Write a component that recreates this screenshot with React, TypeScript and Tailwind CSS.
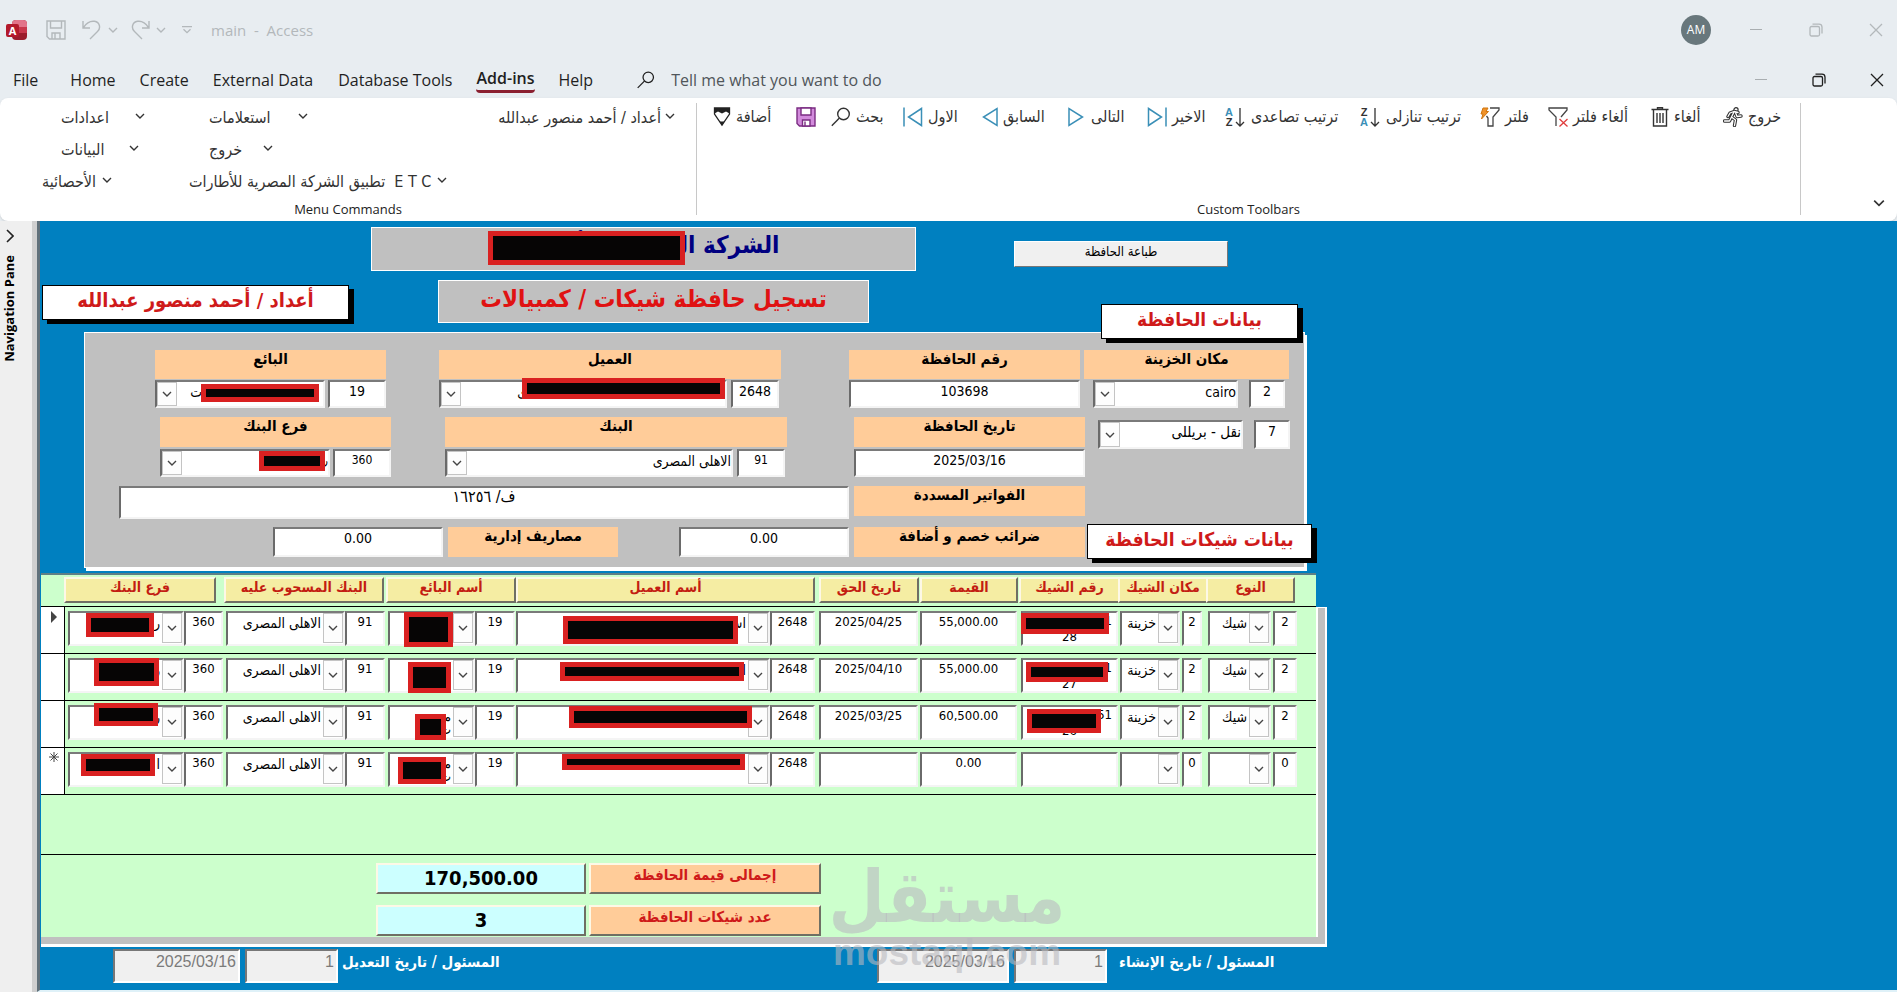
import { useState, type ReactNode } from 'react'
import clsx from 'clsx'

const arabic = "font-['DejaVu_Sans_Condensed','DejaVu_Sans',sans-serif]"
const sunken = 'border-2 border-t-[#7a7a7a] border-l-[#6a6a6a] border-r-[#f4f4f4] border-b-[#f4f4f4] bg-white'
const raised = 'border-2 border-t-[#fdf8e6] border-l-[#fdf8e6] border-r-[#6f6f64] border-b-[#6f6f64]'

const Chevron = ({ className }: { className?: string }) => (
  <svg viewBox="0 0 10 6" className={clsx('h-1.5 w-2.5 shrink-0', className)} fill="none" stroke="currentColor" strokeWidth="1.4">
    <path d="M1 1l4 4 4-4" />
  </svg>
)

const SearchIcon = ({ className }: { className?: string }) => (
  <svg viewBox="0 0 20 20" className={className} fill="none" stroke="currentColor" strokeWidth="1.4">
    <circle cx="12.5" cy="7" r="5.8" />
    <path d="M8.2 11.2L.8 18.8" />
  </svg>
)

// black box that hides a private value
const Redacted = ({ className }: { className: string }) => (
  <span className={clsx('absolute z-10 border-[5px] border-[#d92121] bg-[#060505]', className)} />
)

interface ComboProps {
  label: string
  value: string
  side?: 'left' | 'right'
  className?: string
  textClassName?: string
  children?: ReactNode
}
const Combo = ({ label, value, side = 'left', className, textClassName = 'text-sm', children }: ComboProps) => (
  <div className={clsx('relative grid', sunken, className)}>
    <select
      dir="rtl"
      aria-label={label}
      defaultValue={value}
      className={clsx(
        'col-start-1 row-start-1 h-6 w-full min-w-0 appearance-none self-start overflow-hidden bg-transparent pb-1.5 outline-none',
        side === 'left' ? 'pl-6' : 'pr-[22px]',
        textClassName,
      )}
    >
      <option>{value}</option>
    </select>
    <span
      className={clsx(
        'pointer-events-none col-start-1 row-start-1 flex w-5 items-center justify-center border border-[#c4c4c4] bg-[#fdfdfd] text-[#444]',
        side === 'left' ? 'justify-self-start' : 'mb-px justify-self-end',
      )}
    >
      <Chevron />
    </span>
    {children}
  </div>
)

interface BoxProps {
  id?: string
  label?: string
  value: string
  className?: string
  dir?: 'rtl' | 'ltr'
}
const Box = ({ id, label, value, className, dir }: BoxProps) => {
  const [text, setText] = useState(value)
  return (
    <div className={clsx('flex items-start', sunken, className)}>
      <input
        id={id}
        dir={dir}
        aria-label={label}
        value={text}
        onChange={(e) => setText(e.target.value)}
        className="h-5 w-full min-w-0 bg-transparent pb-[3px] text-center outline-none"
      />
    </div>
  )
}

const FieldLabel = ({ htmlFor, className, children }: { htmlFor?: string; className?: string; children: ReactNode }) => (
  <label htmlFor={htmlFor} dir="rtl" className={clsx('block bg-[#ffcc99] text-center text-[15px] leading-[18px] font-bold', className)}>
    {children}
  </label>
)

const SectionTitle = ({ className, children }: { className?: string; children: ReactNode }) => (
  <h2
    dir="rtl"
    className={clsx(
      'z-10 h-[35px] border border-black bg-white text-center leading-7 font-bold text-[#cf1a1a] shadow-[5px_4px_0_#000]',
      className,
    )}
  >
    {children}
  </h2>
)

const TitleBar = () => (
  <header className="font-['Open_Sans',sans-serif] text-[#1f1f1f]">
    <div className="flex h-[60px] items-center pl-1.5 text-[#b3b8bb]">
      <svg viewBox="0 0 22 22" className="size-[22px]">
        <rect x="6" y="1" width="15" height="20" rx="4" fill="#9b1c2c" />
        <path d="M6 5a4 4 0 014-4h7a4 4 0 014 4v3H6z" fill="#e2748a" />
        <path d="M6 8h15v6H6z" fill="#c8374c" />
        <rect x="0" y="5" width="13" height="13" rx="2" fill="#b3192b" />
        <text x="6.5" y="15.5" fontSize="11" fontWeight="bold" textAnchor="middle" fill="#fff">A</text>
      </svg>
      <button aria-label="Save" className="ml-[18px]">
        <svg viewBox="0 0 20 20" className="size-5" fill="none" stroke="currentColor" strokeWidth="1.4">
          <path d="M1 1h18v18H3.5L1 16.5zM4.5 1v7h11V1M6 19v-6h8v6M9 13v6" />
        </svg>
      </button>
      <button aria-label="Undo" className="ml-4 flex items-center gap-1.5">
        <svg viewBox="0 0 20 20" className="size-5" fill="none" stroke="currentColor" strokeWidth="1.4">
          <path d="M1 1v7h7M1.5 7.5C5 2 9 .8 12.5 1.3c5.5.8 6.5 7 3 10.2L8 19" />
        </svg>
        <Chevron className="w-2" />
      </button>
      <button aria-label="Redo" className="ml-3 flex items-center gap-1.5">
        <svg viewBox="0 0 20 20" className="size-5" fill="none" stroke="currentColor" strokeWidth="1.4">
          <path d="M19 1v7h-7M18.5 7.5C15 2 11 .8 7.5 1.3c-5.5.8-6.5 7-3 10.2L12 19" />
        </svg>
        <Chevron className="w-2" />
      </button>
      <button aria-label="Customize toolbar" className="ml-4">
        <svg viewBox="0 0 10 8" className="h-2 w-2.5" fill="none" stroke="currentColor" strokeWidth="1.3">
          <path d="M0 .7h10M1.5 3.2L5 6.7l3.5-3.5" />
        </svg>
      </button>
      <span className="ml-[19px] text-[15px] whitespace-pre">main  -  Access</span>
      <div className="ml-auto flex items-center pr-3.5">
        <span className="mr-[38px] flex size-[30px] items-center justify-center rounded-full bg-[#68777c] text-xs text-white">AM</span>
        <WindowButtons wide />
      </div>
    </div>
    <nav className="flex h-[38px] items-center pt-px text-base">
      <a href="#file" className="ml-[13px]">File</a>
      <a href="#home" className="ml-8">Home</a>
      <a href="#create" className="ml-6">Create</a>
      <a href="#external" className="ml-6">External Data</a>
      <a href="#tools" className="ml-[25px]">Database Tools</a>
      <a href="#addins" className="ml-6 rounded-sm border-b-[3px] border-[#8b2030] font-semibold">Add-ins</a>
      <a href="#help" className="ml-6">Help</a>
      <SearchIcon className="ml-[44px] size-[18px]" />
      <input
        aria-label="Tell me what you want to do"
        placeholder="Tell me what you want to do"
        className="ml-4 w-64 bg-transparent outline-none placeholder:text-[#50565a]"
      />
      <div className="ml-auto flex items-center pr-[13px]">
        <WindowButtons />
      </div>
    </nav>
  </header>
)

const WindowButtons = ({ wide }: { wide?: boolean }) => (
  <>
    <button aria-label="Minimize" className={clsx('text-[#a9aeb1]', wide ? 'mr-[46px]' : 'mr-11')}>
      <svg viewBox="0 0 14 14" className="size-3.5" stroke="currentColor"><path d="M1 6.5h12" /></svg>
    </button>
    <button aria-label="Restore" className={wide ? 'mr-[46px]' : 'mr-11'}>
      <svg viewBox="0 0 14 14" className="size-3.5" fill="none" stroke="currentColor" strokeWidth="1.3">
        <rect x="1" y="3.5" width="9.5" height="9.5" rx="1.5" />
        <path d="M3.5 1.2H10A3 3 0 0113 4v6.5" />
      </svg>
    </button>
    <button aria-label="Close">
      <svg viewBox="0 0 14 14" className="size-3.5" stroke="currentColor" strokeWidth="1.3"><path d="M1 1l12 12M13 1L1 13" /></svg>
    </button>
  </>
)

const RibbonMenu = ({ className, label }: { className: string; label: string }) => (
  <button className={clsx('flex items-center whitespace-pre', className)}>
    <span dir="rtl">{label}</span>
    <Chevron className="mb-1 w-2" />
  </button>
)

const blue = '#3a8fb7'
const sortIcon = (top: string, bottom: string, topFill: string, bottomFill: string) => (
  <svg viewBox="0 0 22 20" className="h-5 w-[22px] font-['Liberation_Sans',sans-serif]">
    <text x="5" y="9" fontSize="11" fontWeight="bold" textAnchor="middle" fill={topFill}>{top}</text>
    <text x="5" y="19" fontSize="11" fontWeight="bold" textAnchor="middle" fill={bottomFill}>{bottom}</text>
    <path d="M16 1v18M12 15l4 4 4-4" fill="none" stroke="#333" strokeWidth="1.3" />
  </svg>
)

const runner = 'M15 5.5l-4-1-4 1.5-2 3.5M11 5l-2.5 5 4 3-1 5.5M8.5 10L6.5 14H1.5M12.5 5.5l1.5 4 4-.5'

const tools: { label: string; title: string; width: string; icon: ReactNode }[] = [
  {
    label: 'أضافة', title: 'Add', width: 'w-[83px]',
    icon: (
      <svg viewBox="0 0 17 20" className="h-5 w-[18px]">
        <path d="M1 1h15v6L8.5 18 1 7z" fill="#fff" stroke="#222" strokeWidth="1.3" />
        <path d="M1 1h15v5.5l-3.5-2-4 2-4-2L1 6.5zM6 14.5h5l-2.5 4z" fill="#222" />
      </svg>
    ),
  },
  {
    label: '', title: 'Save', width: 'w-[35px]',
    icon: (
      <svg viewBox="0 0 20 20" className="size-5" stroke="#7b2d82" strokeWidth="1.4">
        <path d="M1 1h18v18H3.5L1 16.5z" fill="#d28bdc" />
        <path d="M5 1h10v7H5zM6.5 19v-6H14v6z" fill="#fff" />
        <path d="M9 14.5V19" />
      </svg>
    ),
  },
  { label: 'بحث', title: 'Find', width: 'w-[72px]', icon: <SearchIcon className="size-5" /> },
  {
    label: 'الاول', title: 'First', width: 'w-[79px]',
    icon: <svg viewBox="0 0 20 20" className="size-5" fill="none" stroke={blue} strokeWidth="1.5"><path d="M1 .5v19M18.5 1.5v17L5.5 10z" /></svg>,
  },
  {
    label: 'السابق', title: 'Previous', width: 'w-[86px]',
    icon: <svg viewBox="0 0 16 20" className="h-5 w-4" fill="none" stroke={blue} strokeWidth="1.5"><path d="M15 1.5v17L1.5 10z" /></svg>,
  },
  {
    label: 'التالى', title: 'Next', width: 'w-[79px]',
    icon: <svg viewBox="0 0 16 20" className="mr-0.5 h-5 w-4" fill="none" stroke={blue} strokeWidth="1.5"><path d="M1 1.5v17L14.5 10z" /></svg>,
  },
  {
    label: 'الاخير', title: 'Last', width: 'w-[77px]',
    icon: <svg viewBox="0 0 20 20" className="size-5" fill="none" stroke={blue} strokeWidth="1.5"><path d="M19 .5v19M1.5 1.5v17L14.5 10z" /></svg>,
  },
  { label: 'ترتيب تصاعدى', title: 'Sort ascending', width: 'w-[135px]', icon: sortIcon('A', 'Z', blue, '#333') },
  { label: 'ترتيب تنازلى', title: 'Sort descending', width: 'w-[121px]', icon: sortIcon('Z', 'A', '#333', blue) },
  {
    label: 'فلتر', title: 'Filter', width: 'w-[68px]',
    icon: (
      <svg viewBox="0 0 20 20" className="size-5" fill="none" stroke="#444" strokeWidth="1.3">
        <path d="M10 1h9v2l-6 7v9H8v-8L6.5 9" />
        <path d="M3 1h5L6 4.5h2.5L1.5 12 3 7H1z" fill="#f0932b" stroke="#d0760e" strokeWidth="1" />
      </svg>
    ),
  },
  {
    label: 'ألغاء فلتر', title: 'Clear filter', width: 'w-[103px]',
    icon: (
      <svg viewBox="0 0 20 20" className="size-5" fill="none" stroke="#444" strokeWidth="1.3">
        <path d="M8 19v-9L1 3V1h18v2l-6 7" />
        <path d="M11.5 12l8 7.5M19.5 12l-8 7.5" stroke="#e03c3c" />
      </svg>
    ),
  },
  {
    label: 'ألغاء', title: 'Delete', width: 'w-[72px]',
    icon: (
      <svg viewBox="0 0 18 20" className="h-5 w-[18px]" fill="none" stroke="#333" strokeWidth="1.4">
        <path d="M.5 2.5h17M6.5 2V.7h5V2M2.5 3v16h13V3M6 6v10M9 6v10M12 6v10" />
      </svg>
    ),
  },
  {
    label: 'خروج', title: 'Exit', width: 'w-[77px]',
    icon: (
      <svg viewBox="0 0 20 20" className="size-5" fill="none" strokeLinecap="round" strokeLinejoin="round">
        <circle cx="13" cy="2.8" r="2.1" stroke="#333" strokeWidth="1.2" />
        <path d={runner} stroke="#333" strokeWidth="3.4" />
        <path d={runner} stroke="#fff" strokeWidth="1.3" />
      </svg>
    ),
  },
]

const Ribbon = () => (
  <section className="flex h-[123px] rounded-lg bg-white text-base text-[#333] shadow-sm">
    <div className="flex w-[697px] flex-col border-r [border-image:linear-gradient(transparent_6px,#c8c8c8_6px,#c8c8c8_116px,transparent_116px)_1]">
      <div className={clsx('flex h-[98px] shrink-0 flex-col pt-1', arabic)}>
        <div className="flex h-8 shrink-0">
          <RibbonMenu className="ml-[61px] w-[84px] justify-between" label="اعدادات" />
          <RibbonMenu className="ml-16 w-[99px] justify-between" label="استعلامات" />
          <RibbonMenu className="mr-[21px] ml-auto gap-1" label="أعداد / أحمد منصور عبدالله" />
        </div>
        <div className="flex h-8 shrink-0">
          <RibbonMenu className="ml-[61px] w-[78px] justify-between" label="البيانات" />
          <RibbonMenu className="ml-[70px] w-16 justify-between" label="خروج" />
        </div>
        <div className="flex h-8 shrink-0">
          <RibbonMenu className="ml-[42px] w-[70px] justify-between" label="الأحصائية" />
          <RibbonMenu className="ml-[77px] w-[258px] justify-between" label="E T C  تطبيق الشركة المصرية للأطارات" />
        </div>
      </div>
      <span className="text-center font-['Open_Sans',sans-serif] text-[13px] leading-[26px] text-[#222]">Menu Commands</span>
    </div>
    <div className="flex w-[1104px] flex-col border-r [border-image:linear-gradient(transparent_6px,#c8c8c8_6px,#c8c8c8_116px,transparent_116px)_1]">
      <div className={clsx('flex h-[98px] shrink-0 items-start pt-[7px] pl-4', arabic)}>
        {tools.map((tool) => (
          <button key={tool.title} title={tool.title} className={clsx('flex h-6 shrink-0 items-center gap-[5px] whitespace-nowrap', tool.width)}>
            {tool.icon}
            <span dir="rtl">{tool.label}</span>
          </button>
        ))}
      </div>
      <span className="text-center font-['Open_Sans',sans-serif] text-[13px] leading-[26px] text-[#222]">Custom Toolbars</span>
    </div>
    <button aria-label="Collapse ribbon" className="mr-3 mb-3.5 ml-auto self-end">
      <Chevron className="h-2 w-3" />
    </button>
  </section>
)

const DepositPanel = () => (
  <section className="relative ml-11 flex h-[236px] w-[1221px] flex-col border border-white bg-[#c0c0c0] pt-[17px] text-sm shadow-[2px_3px_0_#fff]">
    <div className="flex pl-[70px]">
      <div className="w-[231px]">
        <FieldLabel htmlFor="seller" className="h-[29px]">البائع</FieldLabel>
        <div className="mt-px flex h-7 gap-[3px]">
          <Combo label="البائع" value="ت" className="w-[170px]" textClassName="pr-[121px] text-sm">
            <Redacted className="top-0.5 right-1 h-[18px] w-[118px]" />
          </Combo>
          <Box id="seller" value="19" className="w-[58px]" />
        </div>
      </div>
      <div className="ml-[53px] w-[342px]">
        <FieldLabel htmlFor="customer" className="h-[29px]">العميل</FieldLabel>
        <div className="mt-px flex h-7 gap-1">
          <Combo label="العميل" value="ى" className="w-[288px]" textClassName="pr-[198px] text-sm">
            <Redacted className="-top-1 right-0 h-[21px] w-[203px]" />
          </Combo>
          <Box id="customer" value="2648" className="w-12" />
        </div>
      </div>
      <div className="ml-[68px] w-[231px]">
        <FieldLabel htmlFor="number" className="h-[29px]">رقم الحافظة</FieldLabel>
        <Box id="number" value="103698" className="mt-px h-7" />
      </div>
      <div className="ml-1 w-[205px]">
        <FieldLabel htmlFor="safe" className="h-[29px]">مكان الخزينة</FieldLabel>
        <div className="mt-px flex h-7 gap-[11px] pl-[9px]">
          <Combo label="مكان الخزينة" value="cairo" className="w-[145px]" />
          <Box id="safe" value="2" className="w-9" />
        </div>
      </div>
    </div>
    <div className="mt-[9px] flex pl-[75px]">
      <div className="w-[231px]">
        <FieldLabel htmlFor="branch" className="h-[30px]">فرع البنك</FieldLabel>
        <div className="mt-0.5 flex h-7 gap-[3px] text-xs">
          <Combo label="فرع البنك" value="ر" className="w-[170px]" textClassName="text-xs">
            <Redacted className="top-0 right-[3px] h-5 w-[66px]" />
          </Combo>
          <Box id="branch" value="360" className="w-[58px]" />
        </div>
      </div>
      <div className="ml-[54px] w-[342px]">
        <FieldLabel htmlFor="bank" className="h-[30px]">البنك</FieldLabel>
        <div className="mt-0.5 flex h-7 gap-1 text-xs">
          <Combo label="البنك" value="الاهلى المصرى" className="w-[288px]" />
          <Box id="bank" value="91" className="w-12" />
        </div>
      </div>
      <div className="ml-[67px] w-[231px]">
        <FieldLabel htmlFor="date" className="h-[30px]">تاريخ الحافظة</FieldLabel>
        <Box id="date" value="2025/03/16" className="mt-0.5 h-7" />
      </div>
      <div className="mt-[3px] ml-[13px] flex h-[29px] gap-[11px]">
        <Combo label="نوع النشاط" value="نقل - بريللى" className="w-[145px]" textClassName="text-[15px]" />
        <Box label="كود النشاط" value="7" className="w-9" />
      </div>
    </div>
    <div className="mt-[9px] flex gap-[5px] pl-[34px] text-base">
      <Box id="invoices" dir="rtl" value="ف/ ١٦٢٥٦" className="h-[33px] w-[730px]" />
      <FieldLabel htmlFor="invoices" className="h-[30px] w-[231px]">الفواتير المسددة</FieldLabel>
    </div>
    <div className="mt-2 flex pl-[188px]">
      <Box id="fees" value="0.00" className="h-[30px] w-[170px]" />
      <FieldLabel htmlFor="fees" className="ml-[5px] h-[30px] w-[170px]">مصاريف إدارية</FieldLabel>
      <Box id="taxes" value="0.00" className="ml-[61px] h-[30px] w-[170px]" />
      <FieldLabel htmlFor="taxes" className="ml-[5px] h-[30px] w-[231px]">ضرائب خصم و أضافة</FieldLabel>
    </div>
    <SectionTitle className="absolute top-[191px] left-[1002px] w-[225px] text-[19px]">بيانات شيكات الحافظة</SectionTitle>
  </section>
)

interface Cheque {
  mark: ReactNode
  branch: string
  branchMask: string
  seller: string[]
  sellerMask: string
  customer: string
  customerMask: string
  due: string
  amount: string
  number: string[]
  numberMask?: string
  code: string
  place: string
  type: string
}

const cheques: Cheque[] = [
  {
    mark: <svg viewBox="0 0 6 12" className="ml-2.5 h-3 w-1.5"><path d="M0 0l6 6-6 6z" fill="#444" /></svg>,
    branch: 'ر', branchMask: 'top-0 left-4 h-6 w-[68px]',
    seller: [], sellerMask: '-top-px left-3.5 h-[35px] w-[49px]',
    customer: 'اس', customerMask: 'top-[3px] left-[45px] h-7 w-[175px]',
    due: '2025/04/25', amount: '55,000.00',
    number: ['1', '28'], numberMask: 'top-0 -left-0.5 h-[21px] w-[88px]',
    code: '2', place: 'خزينة', type: 'شيك',
  },
  {
    mark: null,
    branch: 'ر', branchMask: '-top-0.5 left-6 h-7 w-[65px]',
    seller: [], sellerMask: 'top-0.5 left-[18px] h-[31px] w-[43px]',
    customer: 'ا', customerMask: 'top-0.5 left-[42px] h-[19px] w-[184px]',
    due: '2025/04/10', amount: '55,000.00',
    number: ['1', '27'], numberMask: 'top-0.5 left-[3px] h-5 w-[82px]',
    code: '2', place: 'خزينة', type: 'شيك',
  },
  {
    mark: null,
    branch: 'ر', branchMask: '-top-1 left-6 h-[23px] w-16',
    seller: ['م', 'ت'], sellerMask: 'top-[7px] left-[25px] h-[26px] w-[31px]',
    customer: '', customerMask: '-top-px left-[51px] h-[22px] w-[183px]',
    due: '2025/03/25', amount: '60,500.00',
    number: ['51', '26'], numberMask: 'top-0.5 left-1 h-6 w-[74px]',
    code: '2', place: 'خزينة', type: 'شيك',
  },
  {
    mark: (
      <svg viewBox="0 0 10 10" className="ml-2 size-2.5" stroke="#444"><path d="M5 0v10M0 5h10M1.5 1.5l7 7M8.5 1.5l-7 7" /></svg>
    ),
    branch: 'ا', branchMask: 'top-0 left-[11px] h-[22px] w-[74px]',
    seller: ['م', 'ت'], sellerMask: 'top-[3px] left-2 h-[27px] w-12',
    customer: '', customerMask: 'top-0 left-11 h-4 w-[183px]',
    due: '', amount: '0.00', number: [], code: '0', place: '', type: '',
  },
]

const Heading = ({ span = 1, className, children }: { span?: number; className?: string; children: ReactNode }) => (
  <th colSpan={span} scope="col" className="p-0 align-top">
    <div dir="rtl" className={clsx('mt-0.5 h-[26px] bg-[#f5eda3] text-sm leading-[17px] font-bold text-[#c31d12]', raised, className)}>
      {children}
    </div>
  </th>
)

const ChequeTable = () => (
  <table className="w-full table-fixed border-collapse text-[13px]">
    <colgroup>
      <col className="w-[23px]" />
      <col className="w-[120px]" /><col className="w-10" />
      <col className="w-[121px]" /><col className="w-[41px]" />
      <col className="w-[89px]" /><col className="w-[41px]" />
      <col className="w-[254px]" /><col className="w-[49px]" />
      <col className="w-[101px]" />
      <col className="w-[99px]" />
      <col className="w-[99px]" />
      <col className="w-[62px]" /><col className="w-[26px]" />
      <col className="w-[65px]" /><col className="w-[26px]" />
      <col />
    </colgroup>
    <thead>
      <tr className="h-[31px]">
        <td className="p-0" />
        <Heading span={2} className="mr-2">فرع البنك</Heading>
        <Heading span={2} className="mr-0.5">البنك المسحوب عليه</Heading>
        <Heading span={2}>أسم البائع</Heading>
        <Heading span={2} className="mr-1">أسم العميل</Heading>
        <Heading className="mr-px">تاريخ الحق</Heading>
        <Heading className="mr-px">القيمة</Heading>
        <Heading className="border-r-0">رقم الشيك</Heading>
        <Heading span={2} className="border-r-0">مكان الشيك</Heading>
        <Heading span={2} className="mr-0.5">النوع</Heading>
        <td />
      </tr>
    </thead>
    <tbody>
      {cheques.map((c, i) => (
        <tr key={i} className="h-[47px] border-y border-black align-top [&>td]:px-0 [&>td]:pt-1 [&>td]:pb-0">
          <td className="border-r border-black bg-white">{c.mark}</td>
          <td>
            <Combo label="فرع البنك" side="right" value={c.branch} className="ml-[3px] h-[35px]">
              <Redacted className={c.branchMask} />
            </Combo>
          </td>
          <td><Box label="كود الفرع" value="360" className="mr-px h-[35px]" /></td>
          <td><Combo label="البنك" side="right" value="الاهلى المصرى" className="ml-0.5 h-[35px]" /></td>
          <td><Box label="كود البنك" value="91" className="mr-px h-[35px]" /></td>
          <td>
            <Combo label="البائع" side="right" value={c.seller[0] ?? ''} className="ml-0.5 h-[35px]">
              {c.seller[1] && <span className="absolute top-[15px] right-[22px] leading-4">{c.seller[1]}</span>}
              <Redacted className={c.sellerMask} />
            </Combo>
          </td>
          <td><Box label="كود البائع" value="19" className="mr-px h-[35px]" /></td>
          <td>
            <Combo label="العميل" side="right" value={c.customer} className="h-[35px]">
              <Redacted className={c.customerMask} />
            </Combo>
          </td>
          <td><Box label="كود العميل" value="2648" className="mr-1 h-[35px]" /></td>
          <td><Box label="تاريخ الحق" value={c.due} className="mr-0.5 h-[35px]" /></td>
          <td><Box label="القيمة" value={c.amount} className="mr-0.5 h-[35px]" /></td>
          <td>
            <div className={clsx('relative ml-0.5 h-[35px] overflow-visible', sunken)}>
              {c.number[0] && <span className="absolute top-0 right-1 leading-4">{c.number[0]}</span>}
              <textarea
                aria-label="رقم الشيك"
                defaultValue={c.number[1] ? `\n${c.number[1]}` : ''}
                className="block h-full w-full resize-none overflow-hidden bg-transparent pt-px text-center leading-[15px] outline-none"
              />
              {c.numberMask && <Redacted className={c.numberMask} />}
            </div>
          </td>
          <td><Combo label="مكان الشيك" side="right" value={c.place} className="ml-0.5 h-[35px]" /></td>
          <td><Box label="كود المكان" value={c.code} className="mr-1 ml-0.5 h-[35px]" /></td>
          <td><Combo label="النوع" side="right" value={c.type} className="ml-0.5 h-[35px]" /></td>
          <td><Box label="كود النوع" value={c.code} className="ml-0.5 h-[35px]" /></td>
          <td />
        </tr>
      ))}
    </tbody>
  </table>
)

const Total = ({ label, value }: { label: string; value: string }) => (
  <div className="flex gap-[3px]">
    <output className={clsx('h-[31px] w-[210px] bg-[#ccffff] text-center text-xl leading-[26px] font-bold', raised)}>{value}</output>
    <span dir="rtl" className={clsx('h-[31px] w-[232px] bg-[#ffcc99] text-center text-[15px] leading-5 font-bold text-[#cf1a1a]', raised)}>{label}</span>
  </div>
)

const stampBox =
  "h-[34px] border-2 border-t-[#777] border-l-[#777] border-r-white border-b-white bg-[#f0f0f0] pr-0.5 pb-2 text-right font-['Liberation_Sans',sans-serif] text-base text-[#7b7b7b]"

interface StampProps {
  id: string
  label: string
  className?: string
  dateClass: string
  labelClass: string
}
const Stamp = ({ id, label, className, dateClass, labelClass }: StampProps) => (
  <div className={clsx('flex', className)}>
    <input readOnly aria-label={`${label} - التاريخ`} value="2025/03/16" className={clsx(stampBox, dateClass)} />
    <input id={id} readOnly value="1" className={clsx(stampBox, 'ml-[5px] w-[93px]')} />
    <label htmlFor={id} dir="rtl" className={clsx('pt-0.5 text-[15px] font-bold text-white', labelClass)}>{label}</label>
  </div>
)

export default function App() {
  return (
    <div className="flex min-h-screen flex-col bg-[#e8edf1] text-black">
      <TitleBar />
      <Ribbon />
      <main className="flex flex-1 bg-[#efefef]">
        <aside className="flex w-8 flex-col items-start pt-2 pl-1.5">
          <button aria-label="Open navigation pane">
            <svg viewBox="0 0 8 14" className="h-3.5 w-2" fill="none" stroke="#222" strokeWidth="1.6"><path d="M1 1l6 6-6 6" /></svg>
          </button>
          <span className="mt-3 -ml-[7px] rotate-180 font-['Open_Sans',sans-serif] text-[13px] leading-5 font-bold whitespace-nowrap [writing-mode:vertical-rl]">
            Navigation Pane
          </span>
        </aside>
        <div className={clsx('ml-[5px] min-w-0 flex-1 overflow-hidden border-b-2 border-l-[3px] border-b-[#dff1f8] border-l-[#60707a] bg-[#0080c0] shadow-[-5px_0_0_#cfcfcf]', arabic)}>
          <div className="flex items-start pt-1.5">
            <h1
              dir="rtl"
              className="relative ml-[331px] h-11 w-[545px] border border-white bg-[#c0c0c0] text-center text-2xl leading-[34px] font-bold text-[#000080]"
            >
              الشركة المصرية للأطارات
              <Redacted className="top-[3px] left-[116px] h-[34px] w-[197px]" />
            </h1>
            <button className="mt-3.5 ml-[98px] flex h-[26px] w-[214px] justify-center border border-t-white border-r-[#777] border-b-[#777] border-l-white bg-[#f0f0f0] text-[13px] leading-5">
              طباعة الحافظة
            </button>
          </div>
          <div className="mt-2 flex h-[53px] items-start">
            <SectionTitle className="mt-1.5 ml-0.5 w-[307px] text-xl">أعداد / أحمد منصور عبدالله</SectionTitle>
            <h2 dir="rtl" className="mt-px ml-[89px] h-[43px] w-[431px] border border-white bg-[#c0c0c0] text-center text-2xl leading-9 font-bold text-[#e01212]">
              تسجيل حافظة شيكات / كمبيالات
            </h2>
            <SectionTitle className="mt-[25px] ml-[232px] w-[197px] text-[19px]">بيانات الحافظة</SectionTitle>
          </div>
          <DepositPanel />
          <section className="relative mt-[5px] ml-px w-[1286px]">
            <div className="flex">
              <div className="h-[364px] w-[1275px] border-t-2 border-[#5f7f86] bg-[#ccffcc]">
                <ChequeTable />
                <div className="mt-[59px] flex flex-col gap-[11px] border-t border-black pt-2 pl-[335px]">
                  <Total label="إجمالى قيمة الحافظة" value="170,500.00" />
                  <Total label="عدد شيكات الحافظة" value="3" />
                </div>
              </div>
              <div className="mt-[34px] w-[11px] border-x-2 border-t border-white bg-[#c0c0c0]" />
            </div>
            <div className="h-2.5 border-r-2 border-b-[3px] border-white bg-[#c0c0c0]" />
            <div className="pointer-events-none absolute top-[286px] left-[792px] z-20 flex w-[228px] flex-col items-center text-[#b9b9bf]/60">
              <span dir="rtl" className="text-7xl leading-[76px] font-bold">مستقل</span>
              <span className="font-['Liberation_Sans',sans-serif] text-[37px] leading-9 font-bold">mostaql.com</span>
            </div>
          </section>
          <footer className="flex pt-0.5 pb-[7px]">
            <Stamp id="edited-by" label="المسئول / تاريخ التعديل" className="ml-[73px] w-[764px]" dateClass="w-[127px]" labelClass="pl-1" />
            <Stamp id="created-by" label="المسئول / تاريخ الإنشاء" dateClass="w-[132px]" labelClass="pl-3" />
          </footer>
        </div>
      </main>
    </div>
  )
}
